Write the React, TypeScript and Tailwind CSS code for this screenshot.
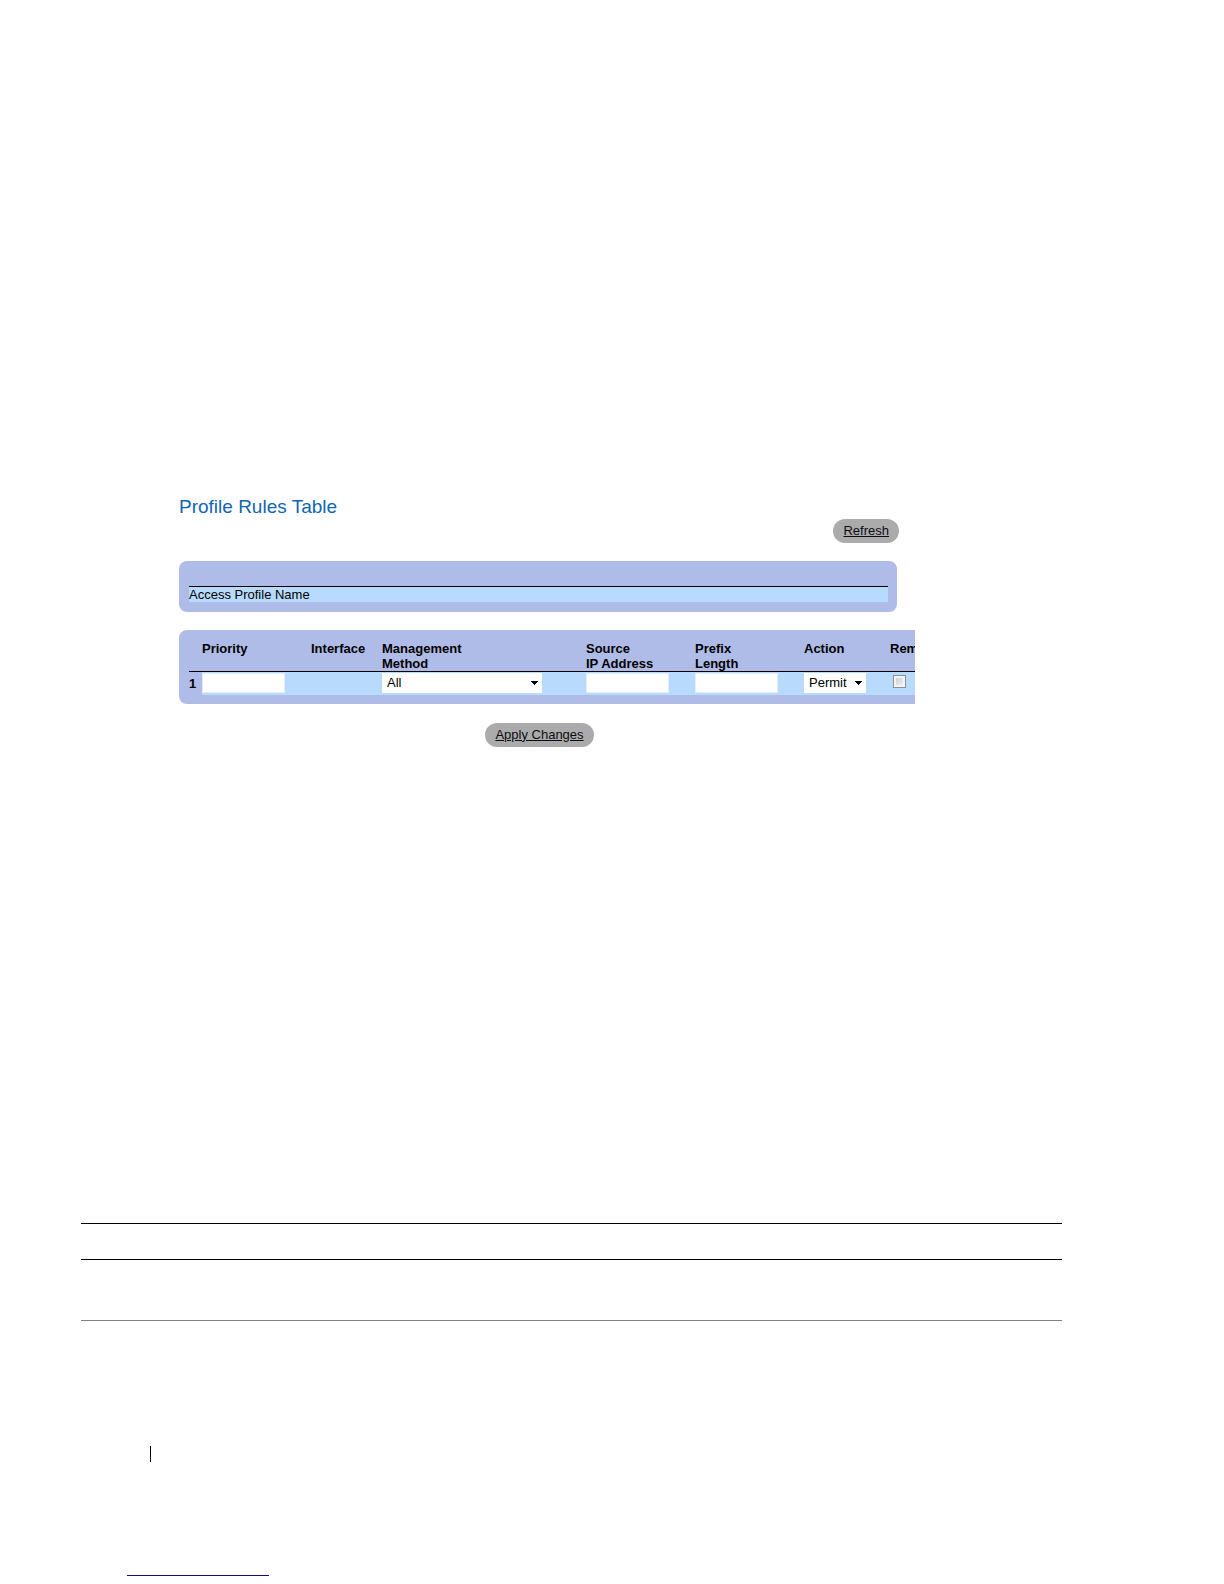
import React from 'react';

interface SelectBoxProps {
  label: string;
  options: string[];
  className: string;
}

const SelectBox: React.FC<SelectBoxProps> = ({ label, options, className }) => (
  <div className={`relative ${className}`}>
    <select
      aria-label={label}
      className="block h-5 w-full appearance-none bg-white pl-[5px] pr-4 text-[13px] leading-5 text-black"
    >
      {options.map((option) => (
        <option key={option}>{option}</option>
      ))}
    </select>
    <svg
      className="pointer-events-none absolute right-[3px] top-2 h-1 w-2"
      viewBox="0 0 8 4"
      shapeRendering="crispEdges"
      aria-hidden="true"
    >
      <path d="M0 0h7v1H6v1H5v1H4v1H3V3H2V2H1V1H0z" fill="#000" />
    </svg>
  </div>
);

const TextBox: React.FC<{ label: string }> = ({ label }) => (
  <input
    type="text"
    aria-label={label}
    className="block h-5 w-[83px] border border-[#e3eefa] bg-white px-1 text-[13px]"
  />
);

const PillButton: React.FC<{ children: React.ReactNode }> = ({ children }) => (
  <button
    type="button"
    className="h-6 rounded-full bg-[#ababab] px-[10px] text-[13px] leading-6 text-[#0c0c14] underline underline-offset-1"
  >
    {children}
  </button>
);

const ProfileRules: React.FC = () => (
  <section className="ml-[179px] mr-[309px]">
    <h1 className="text-[19px] leading-6 text-[#0f66b5]">Profile Rules Table</h1>

    <div className="mr-4 flex justify-end">
      <PillButton>Refresh</PillButton>
    </div>

    <div className="mr-[18px] mt-[18px] rounded-lg bg-[#afbce7] pb-[10px] pl-[10px] pr-[9px] pt-[25px]">
      <div className="border-t border-black bg-[#b8dafc] text-[13px] leading-[15px]">
        Access Profile Name
      </div>
    </div>

    <div className="mt-[18px] overflow-hidden rounded-l-lg bg-[#afbce7] pb-[9px] pl-[10px] pt-[11px]">
      <table className="w-[800px] table-fixed border-collapse text-left text-[13px]">
        <colgroup>
          <col className="w-[13px]" />
          <col className="w-[109px]" />
          <col className="w-[71px]" />
          <col className="w-[204px]" />
          <col className="w-[109px]" />
          <col className="w-[109px]" />
          <col className="w-[86px]" />
          <col />
        </colgroup>
        <thead>
          <tr className="border-b border-black align-top leading-[15px]">
            <td></td>
            <th scope="col">Priority</th>
            <th scope="col">Interface</th>
            <th scope="col">
              Management
              <br />
              Method
            </th>
            <th scope="col">
              Source
              <br />
              IP Address
            </th>
            <th scope="col">
              Prefix
              <br />
              Length
            </th>
            <th scope="col">Action</th>
            <th scope="col">Remove</th>
          </tr>
        </thead>
        <tbody>
          <tr className="h-[23px] bg-[#b8dafc]">
            <th scope="row" className="bg-[#afbce7]">
              1
            </th>
            <td>
              <TextBox label="Priority" />
            </td>
            <td></td>
            <td>
              <SelectBox label="Management Method" options={['All']} className="w-40" />
            </td>
            <td>
              <TextBox label="Source IP Address" />
            </td>
            <td>
              <TextBox label="Prefix Length" />
            </td>
            <td>
              <SelectBox label="Action" options={['Permit', 'Deny']} className="w-[62px]" />
            </td>
            <td>
              <input
                type="checkbox"
                aria-label="Remove"
                className="mb-1 ml-[3px] block size-[13px] appearance-none border border-[#8e8f8f] bg-linear-to-br from-[#c4c8cc] to-[#f6f6f6] shadow-[inset_0_0_0_2px_#f4f4f4]"
              />
            </td>
          </tr>
        </tbody>
      </table>
    </div>

    <div className="mt-[19px] flex justify-center pr-[15px]">
      <PillButton>Apply Changes</PillButton>
    </div>
  </section>
);

const App: React.FC = () => (
  <main className="bg-white pb-2 pt-[495px] font-['Liberation_Sans',Arial,sans-serif] text-black">
    <ProfileRules />

    {/* Empty two-row table rules */}
    <div className="ml-[81px] mr-[162px] mt-[476px]">
      <div className="h-[37px] border-y border-black" />
      <div className="h-[61px] border-b border-[#808080]" />
    </div>

    {/* Footer */}
    <footer>
      <div className="ml-[150px] mt-[125px] h-4 w-px bg-black" />
      <div className="ml-[127px] mt-[113px] h-px w-[142px] bg-[#15098f]" />
    </footer>
  </main>
);

export default App;
